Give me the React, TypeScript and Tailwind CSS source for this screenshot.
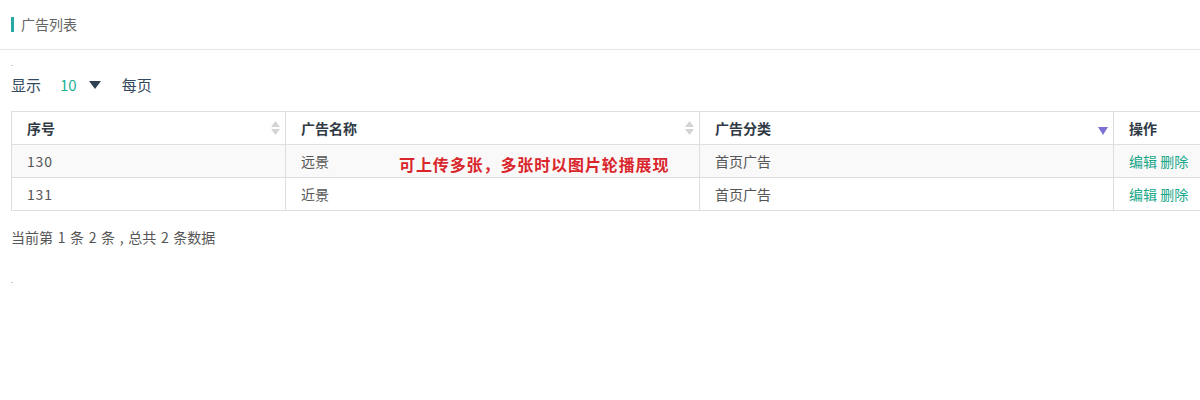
import React from "react";

const font = { fontFamily: '"Noto Sans CJK SC", "Noto Sans", sans-serif' };

function SortBoth() {
  return (
    <svg width="9" height="14" viewBox="0 0 9 14" className="shrink-0">
      <path d="M4.5 0 L9 6 L0 6 Z" fill="#d4d4d4" />
      <path d="M0 8 L9 8 L4.5 14 Z" fill="#d4d4d4" />
    </svg>
  );
}

function SortDown() {
  return (
    <svg width="10" height="8" viewBox="0 0 10 8" className="shrink-0">
      <path d="M0 0 L10 0 L5 8 Z" fill="#7b72d3" />
    </svg>
  );
}

export default function App() {
  const rows = [
    { id: "130", name: "远景", cat: "首页广告" },
    { id: "131", name: "近景", cat: "首页广告" },
  ];
  return (
    <div className="w-[1200px] h-[400px] bg-white overflow-hidden text-[#333]" style={font}>
      <div className="h-[50px] border-b border-[#e7e7e7] flex items-center pl-[11px]">
        <div className="w-[3px] h-[15px] bg-[#24a9a5]" />
        <span className="ml-[7px] text-[14px] text-[#666]">广告列表</span>
      </div>
      <div className="pl-[11px] pt-[15px]">
        <div className="w-[2px] h-[1px] bg-[#ccc]" />
        <div className="flex items-center h-[26px] mt-[6px] text-[15px] text-[#34495e]">
          <span>显示</span>
          <span className="ml-[19px] text-[#1ab394] text-[15px]">10</span>
          <svg width="12" height="8" viewBox="0 0 12 8" className="ml-[12px]">
            <path d="M0 0 L12 0 L6 8 Z" fill="#2f4050" />
          </svg>
          <span className="ml-[21px]">每页</span>
        </div>
        <div className="relative mt-[13px] w-[1260px]">
          <table className="border-collapse text-[14px] w-[1260px] table-fixed">
            <colgroup>
              <col className="w-[274px]" />
              <col className="w-[414px]" />
              <col className="w-[414px]" />
              <col className="w-[158px]" />
            </colgroup>
            <thead>
              <tr className="h-[33px]">
                <th className="border border-[#dedede] px-[15px] text-left font-bold text-[#2f3a45]">
                  <div className="flex items-center justify-between">
                    <span>序号</span>
                    <span className="-mr-[10px]"><SortBoth /></span>
                  </div>
                </th>
                <th className="border border-[#dedede] px-[15px] text-left font-bold text-[#2f3a45]">
                  <div className="flex items-center justify-between">
                    <span>广告名称</span>
                    <span className="-mr-[10px]"><SortBoth /></span>
                  </div>
                </th>
                <th className="border border-[#dedede] px-[15px] text-left font-bold text-[#2f3a45]">
                  <div className="flex items-center justify-between">
                    <span>广告分类</span>
                    <span className="-mr-[10px] mt-[6px]"><SortDown /></span>
                  </div>
                </th>
                <th className="border border-[#dedede] px-[15px] text-left font-bold text-[#2f3a45]">操作</th>
              </tr>
            </thead>
            <tbody>
              {rows.map((r, i) => (
                <tr key={r.id} className={`h-[33px] ${i === 0 ? "bg-[#f9f9f9]" : "bg-white"} text-[#555]`}>
                  <td className="border border-[#dedede] px-[15px] tracking-[0.8px]">{r.id}</td>
                  <td className="border border-[#dedede] px-[15px]">{r.name}</td>
                  <td className="border border-[#dedede] px-[15px]">{r.cat}</td>
                  <td className="border border-[#dedede] px-[15px] text-[#18a689]">
                    编辑 删除
                  </td>
                </tr>
              ))}
            </tbody>
          </table>
          <div className="absolute left-[388px] top-[41px] text-[16px] font-bold text-[#d9262c] tracking-[0.9px]">
            可上传多张，多张时以图片轮播展现
          </div>
        </div>
        <div className="mt-[16px] text-[14px] text-[#555] [word-spacing:1.5px]">当前第 1 条 2 条 , 总共 2 条数据</div>
        <div className="mt-[34px] w-[2px] h-[1px] bg-[#ccc]" />
      </div>
    </div>
  );
}
